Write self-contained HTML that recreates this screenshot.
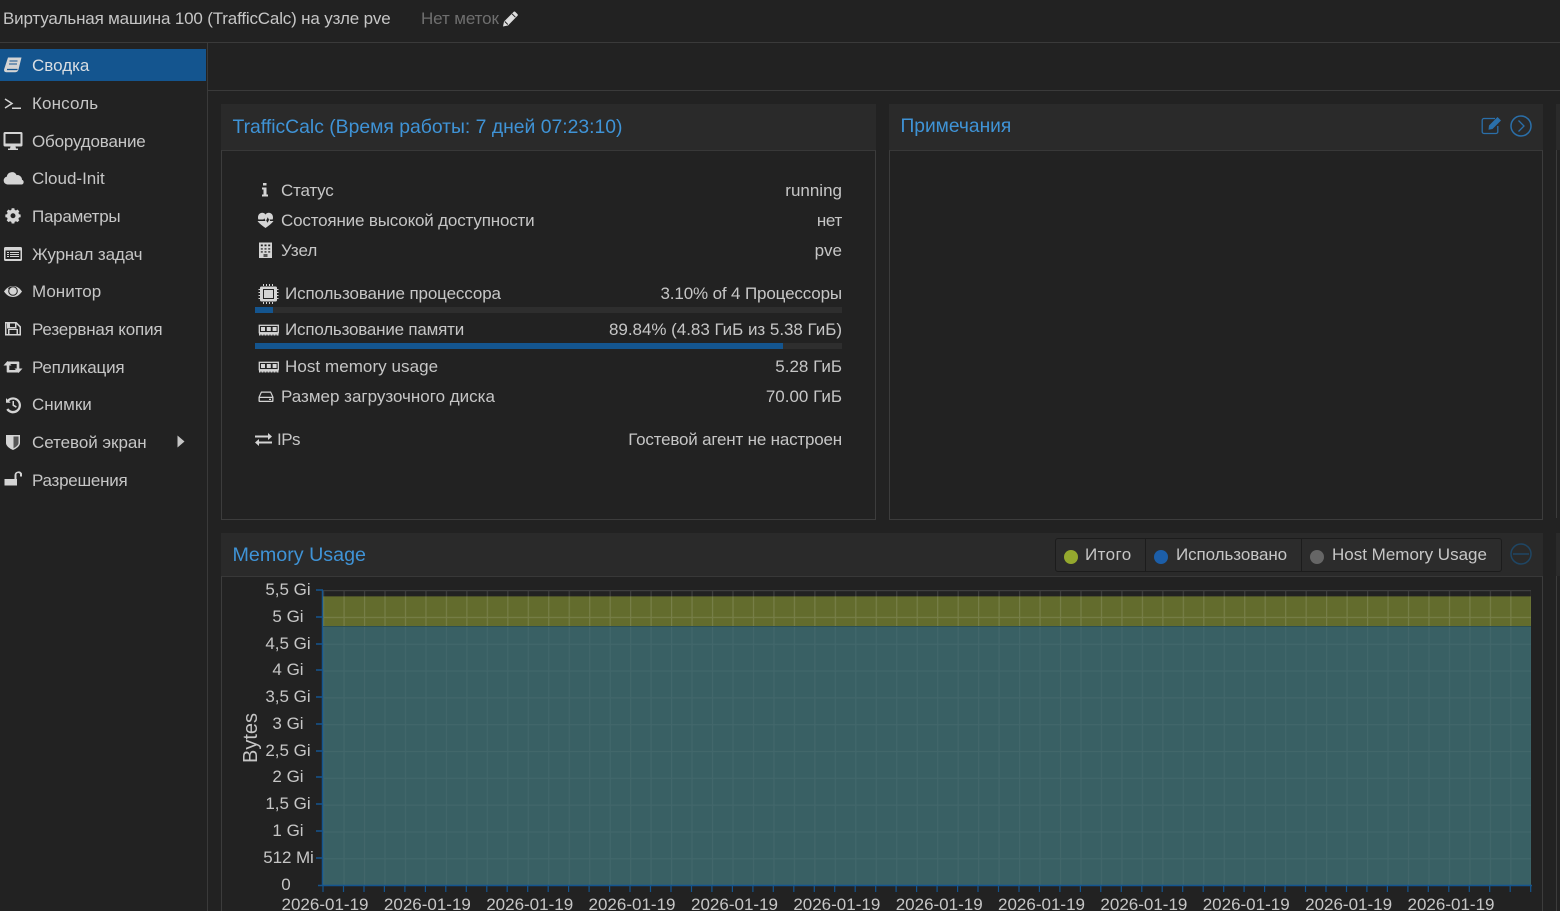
<!DOCTYPE html>
<html><head><meta charset="utf-8"><style>
html,body{margin:0;padding:0;background:#222;width:1560px;height:911px;overflow:hidden;}
#w{width:1560px;height:911px;overflow:hidden;position:relative;font-family:"Liberation Sans",sans-serif;font-size:17px;color:#c6c6c6;}
.t{position:absolute;white-space:nowrap;line-height:20px;}
.r{position:absolute;white-space:nowrap;line-height:20px;right:718px;text-align:right;}
.b{position:absolute;}
.h{color:#3f93d6;font-size:19px;line-height:24px;position:absolute;white-space:nowrap;}
svg{position:absolute;overflow:visible;}
</style></head><body><div id="w">
<div class="b" style="left:0;top:42px;width:1560px;height:1px;background:#3a3a3a"></div>
<div class="t" style="left:3px;top:9px;letter-spacing:-.17px">Виртуальная машина 100 (TrafficCalc) на узле pve</div>
<div class="t" style="left:421px;top:9px;color:#6f6f6f;letter-spacing:-.1px">Нет меток</div>
<svg style="left:502px;top:11px" width="16" height="16" viewBox="0 0 16 16"><path d="M1 15.500l1-5L11.500 1c.6-.6 1.300-.6 1.900 0l2 2c.6.600.6 1.300 0 1.900L6 14.500z" fill="#dedede"/><path d="M2.800 10.500l3 3M10 2.800l3.400 3.400" stroke="#222" stroke-width="1" fill="none"/></svg>

<div class="b" style="left:207px;top:43px;width:1px;height:868px;background:#3a3a3a"></div>
<div class="b" style="left:208px;top:90px;width:1352px;height:1px;background:#3a3a3a"></div>
<div class="b" style="left:0;top:49px;width:206px;height:32px;background:#14558f"></div>

<div class="t" style="left:32px;top:56px;color:#d8dde2">Сводка</div>
<div class="t" style="left:32px;top:94px;letter-spacing:.14px">Консоль</div>
<div class="t" style="left:32px;top:132px;letter-spacing:-.17px">Оборудование</div>
<div class="t" style="left:32px;top:169px">Cloud-Init</div>
<div class="t" style="left:32px;top:207px;letter-spacing:-.25px">Параметры</div>
<div class="t" style="left:32px;top:245px;letter-spacing:-.12px">Журнал задач</div>
<div class="t" style="left:32px;top:282px">Монитор</div>
<div class="t" style="left:32px;top:320px;letter-spacing:-.17px">Резервная копия</div>
<div class="t" style="left:32px;top:358px;letter-spacing:-.2px">Репликация</div>
<div class="t" style="left:32px;top:395px">Снимки</div>
<div class="t" style="left:32px;top:433px;letter-spacing:-.04px">Сетевой экран</div>
<div class="t" style="left:32px;top:471px;letter-spacing:-.25px">Разрешения</div>

<svg style="left:0;top:0" width="208" height="500" viewBox="0 0 208 500">
<g fill="#d4d4d4" stroke="none">
<path d="M8 57.500h13.500l-3 12c-.4 1.700-1.500 2.700-3.200 2.700H6.300C4.700 72.200 3.600 71 4.200 69z"/>
<path d="M7 69.500h10.500" stroke="#14558f" stroke-width="1.300"/>
<path d="M9.500 61h8M9 64h8" stroke="#14558f" stroke-width="1"/>
<path d="M5 99l7 4.500-7 4.500" fill="none" stroke="#d4d4d4" stroke-width="1.500"/>
<rect x="12" y="107.500" width="9" height="1.500"/>
<path d="M3.500 133.500a1.500 1.500 0 0 1 1.500-1.500h16a1.500 1.500 0 0 1 1.500 1.500v11.500a1.500 1.500 0 0 1-1.500 1.500h-5.500l.5 2h2v1.500H8v-1.500h2l.5-2H5a1.500 1.500 0 0 1-1.500-1.500zM5.500 134v9.500h15V134z" fill-rule="evenodd"/>
<path d="M7.500 185a4 4 0 0 1-.7-7.900 5.200 5.200 0 0 1 9.800-1.500 4.700 4.700 0 0 1 5.400 4.700 2.500 2.500 0 0 1 0 4.700z" transform="translate(0,-.5)"/>
<g transform="translate(13,215.700) scale(.83) translate(-13,-216)">
<path d="M11.400 207h3.200l.4 2 1.600.7 1.800-1.100 2.200 2.200-1.100 1.800.7 1.600 2 .4v3.200l-2 .4-.7 1.600 1.100 1.800-2.200 2.200-1.800-1.100-1.600.7-.4 2h-3.200l-.4-2-1.600-.7-1.800 1.100-2.200-2.200 1.100-1.800-.7-1.600-2-.4v-3.200l2-.4.7-1.600-1.100-1.800 2.200-2.200 1.800 1.100 1.600-.7zM13 213a3 3 0 1 0 0 6 3 3 0 0 0 0-6z" fill-rule="evenodd"/>
</g>
<path d="M4 248.500a1.500 1.500 0 0 1 1.500-1.500h15a1.500 1.500 0 0 1 1.500 1.500v11a1.500 1.500 0 0 1-1.500 1.500h-15a1.500 1.500 0 0 1-1.500-1.500zM5.500 250.500v8.500h15v-8.500zM7 252h2v1H7zM7 254h2v1H7zM7 256h2v1H7zM10 252h9v1h-9zM10 254h9v1h-9zM10 256h9v1h-9z" fill-rule="evenodd"/>
<path d="M4 291.500c2.500-3.700 5.500-5.500 9-5.500s6.500 1.800 9 5.500c-2.500 3.700-5.500 5.500-9 5.500s-6.500-1.800-9-5.500z"/>
<circle cx="13" cy="291" r="4.300" fill="none" stroke="#222" stroke-width="1"/>
<path d="M8.200 288.500c1-.7 2-1.100 3-1.300" fill="none" stroke="#222" stroke-width=".8"/>
<path d="M5 322h11.500l4.500 4.500V335.500H5zM6.500 323.500v10.500h1.500v-5h10v5h1.500v-6.800l-3-3v4.300h-9.500v-5zM10 323.500v3.500h5v-3.500zM9.500 330v4h7v-4z" fill-rule="evenodd"/>
<path d="M3.500 365.500L7.500 361l4 4.500H9.300V370H16.500L18.500 372.500H7.500Q6.700 372.500 6.700 371.700V365.500Z"/>
<path d="M22.500 368.500L18.500 373l-4-4.500H16.700V364H9.500L7.500 361.500H18.500Q19.300 361.500 19.300 362.300V368.500Z"/>
<path d="M6 398v4.700h4.700l-1.600-1.600a5.700 5.700 0 1 1-.8 7.300l-2 1.300a8 8 0 1 0 1.100-10.100zM12.500 401v4.700l3.500 2 .8-1.300-2.800-1.600V401z" fill-rule="evenodd"/>
<path d="M6 435h14v8c0 3-3.500 5.500-7 7-3.500-1.500-7-4-7-7z"/>
<path d="M13.500 436.500h5v6.500c0 2-2.500 4-5 5.300z" fill="#555"/>
<path d="M177.500 435.500l7 6-7 6z" fill="#c6c6c6"/>
<path d="M4.500 479h10v-3.500a4 4 0 0 1 7.500-2v3h-2v-2.500a2 2 0 0 0-3.500 0v5h.5v6.500h-12.500z"/>
</g>
</svg>

<!-- status panel -->
<div class="b" style="left:221px;top:104px;width:655px;height:46px;background:#2a2a2a"></div>
<div class="b" style="left:221px;top:150px;width:653px;height:368px;border:1px solid #3c3c3c;border-top:1px solid #383838"></div>
<div class="h" style="left:232.500px;top:115px;font-size:19.350px">TrafficCalc (Время работы: 7 дней 07:23:10)</div>

<div class="t" style="left:281px;top:181px;letter-spacing:-.2px">Статус</div>
<div class="r" style="top:181px">running</div>
<div class="t" style="left:281px;top:211px;letter-spacing:-.17px">Состояние высокой доступности</div>
<div class="r" style="top:211px;letter-spacing:-.3px">нет</div>
<div class="t" style="left:281px;top:241px">Узел</div>
<div class="r" style="top:241px">pve</div>
<div class="t" style="left:285px;top:284px;letter-spacing:-.125px">Использование процессора</div>
<div class="r" style="top:284px;letter-spacing:-.14px">3.10% of 4 Процессоры</div>
<div class="b" style="left:255px;top:307px;width:587px;height:6px;background:#2e2e2e"></div>
<div class="b" style="left:255px;top:307px;width:18px;height:6px;background:#14558f"></div>
<div class="t" style="left:285px;top:320px;letter-spacing:-.2px">Использование памяти</div>
<div class="r" style="top:320px;letter-spacing:-.03px">89.84% (4.83 ГиБ из 5.38 ГиБ)</div>
<div class="b" style="left:255px;top:343px;width:587px;height:6px;background:#2e2e2e"></div>
<div class="b" style="left:255px;top:343px;width:528px;height:6px;background:#14558f"></div>
<div class="t" style="left:285px;top:357px;letter-spacing:.06px">Host memory usage</div>
<div class="r" style="top:357px">5.28 ГиБ</div>
<div class="t" style="left:281px;top:387px">Размер загрузочного диска</div>
<div class="r" style="top:387px">70.00 ГиБ</div>
<div class="t" style="left:277px;top:430px;letter-spacing:-.5px">IPs</div>
<div class="r" style="top:430px;letter-spacing:-.19px">Гостевой агент не настроен</div>

<svg style="left:0;top:0" width="300" height="460" viewBox="0 0 300 460">
<g fill="#d4d4d4">
<path d="M263 183h3.500v2.500H263zM262 187.500h4.500v7h1.500v2h-6v-2h1.500v-5H262z"/>
<path d="M258 217.500c0-3 2-4.700 4.200-4.700 1.400 0 2.700.7 3.300 1.800.6-1.100 1.900-1.800 3.300-1.800 2.200 0 4.200 1.700 4.200 4.700 0 .8-.2 1.500-.4 2h-3.700l-1.100-2.200-2 3.800-1.600-2.800-.7 1.200h-5.100c-.2-.5-.4-1.200-.4-2zM259.500 221h5.500l.8-1.200 1.700 3 2-3.700.6 1.900h3.400c-1.600 2.300-4.600 4.700-8 7-3.400-2.300-6.400-4.700-8-7z"/>
<path d="M259 242.500h13v15.500h-13zM260.800 244.500v1.700h2v-1.700zM264.500 244.500v1.700h2v-1.700zM268.200 244.500v1.700h2v-1.700z" fill-rule="evenodd"/>
<path d="M260.800 248h2v1.700h-2zM264.500 248h2v1.700h-2zM268.200 248h2v1.700h-2zM260.800 251h2v1.700h-2zM264.500 251h2v1.700h-2zM268.200 251h2v1.700h-2zM263.500 254h4v3h-4z" fill="#555"/>
<path d="M261.500 286.500h14a1.500 1.500 0 0 1 1.500 1.500v12a1.500 1.500 0 0 1-1.500 1.500h-14a1.500 1.500 0 0 1-1.500-1.500v-12a1.500 1.500 0 0 1 1.500-1.500zM263 289v10h11v-10z" fill-rule="evenodd"/>
<rect x="264" y="290" width="9" height="8"/>
<path d="M263 284h1v2h-1zM266 284h1v2h-1zM269 284h1v2h-1zM272 284h1v2h-1zM263 302h1v2h-1zM266 302h1v2h-1zM269 302h1v2h-1zM272 302h1v2h-1zM258.500 289h1.500v1h-1.500zM258.500 292h1.500v1h-1.500zM258.500 295h1.500v1h-1.500zM258.500 298h1.500v1h-1.500zM277 289h1.500v1H277zM277 292h1.500v1H277zM277 295h1.500v1H277zM277 298h1.500v1H277z"/>
<g id="ram">
<rect x="259.300" y="325.300" width="19" height="7.400" fill="none" stroke="#d4d4d4" stroke-width="1.300"/>
<path d="M261 327h4v4h-4zM266.800 327h4v4h-4zM272.600 327h4v4h-4z"/>
<path d="M259 333h19.500v2.500h-19.500z" fill="#d4d4d4"/>
<path d="M261 334.500v1.300M264 334.500v1.300M267 334.500v1.300M270 334.500v1.300M273 334.500v1.300M276 334.500v1.300" stroke="#222" stroke-width="1"/>
</g>
<g transform="translate(0,37)">
<rect x="259.300" y="325.300" width="19" height="7.400" fill="none" stroke="#d4d4d4" stroke-width="1.300"/>
<path d="M261 327h4v4h-4zM266.800 327h4v4h-4zM272.600 327h4v4h-4z"/>
<path d="M259 333h19.500v2.500h-19.500z" fill="#d4d4d4"/>
<path d="M261 334.500v1.300M264 334.500v1.300M267 334.500v1.300M270 334.500v1.300M273 334.500v1.300M276 334.500v1.300" stroke="#222" stroke-width="1"/>
</g>
<path d="M258.500 397l2.500-5.500h10l2.500 5.500v4a1 1 0 0 1-1 1h-13a1 1 0 0 1-1-1zM261.700 392.700l-1.800 4h12.200l-1.800-4zM259.800 398v2.800h12.400V398zM269 398.800h2v1.200h-2z" fill-rule="evenodd"/>
<path d="M255 435.500h13v-2.500l4 3.500-4 3.500v-2.500h-13zM272 441.500h-13v-2.500l-4 3.500 4 3.500v-2.500h13z"/>
</g>
</svg>

<!-- notes panel -->
<div class="b" style="left:889px;top:104px;width:654px;height:46px;background:#2a2a2a"></div>
<div class="b" style="left:889px;top:150px;width:652px;height:368px;border:1px solid #3c3c3c;border-top:1px solid #383838"></div>
<div class="h" style="left:900.500px;top:115px;font-size:19.200px">Примечания</div>
<svg style="left:1481px;top:115px" width="54" height="22" viewBox="0 0 54 22">
<g fill="none" stroke="#2a6fa9" stroke-width="1.300">
<path d="M14 3.500H3a1.800 1.800 0 0 0-1.800 1.800v11.400A1.800 1.800 0 0 0 3 18.500h12a1.800 1.800 0 0 0 1.800-1.800V11"/>
<circle cx="40" cy="11" r="10" stroke-width="1.500"/>
<path d="M37.500 5.500L43 11l-5.500 5.500" stroke-width="1.300"/>
</g>
<path d="M8 10.500L16.500 2l3.500 3.500-8.500 8.500-4 .7z" fill="#2a6fa9"/>
</svg>

<!-- next column edge -->
<div class="b" style="left:1556px;top:104px;width:4px;height:46px;background:#2a2a2a"></div>
<div class="b" style="left:1556px;top:150px;width:4px;height:368px;border-left:1px solid #3c3c3c;box-sizing:border-box"></div>
<div class="b" style="left:1556px;top:533px;width:4px;height:43px;background:#2a2a2a"></div>
<div class="b" style="left:1556px;top:576px;width:4px;height:335px;border-left:1px solid #3c3c3c;box-sizing:border-box"></div>

<!-- memory panel -->
<div class="b" style="left:221px;top:533px;width:1322px;height:43px;background:#2a2a2a"></div>
<div class="b" style="left:221px;top:576px;width:1320px;height:340px;border:1px solid #3c3c3c;border-top:1px solid #383838"></div>
<div class="h" style="left:232.500px;top:543px;font-size:19.700px">Memory Usage</div>

<div class="b" style="left:1055px;top:538px;width:445px;height:32px;border:1px solid #1c1c1c;border-radius:3px;background:#2c2c2c"></div>
<div class="b" style="left:1145px;top:539px;width:1px;height:32px;background:#1c1c1c"></div>
<div class="b" style="left:1301px;top:539px;width:1px;height:32px;background:#1c1c1c"></div>
<div class="b" style="left:1064px;top:550px;width:14px;height:14px;border-radius:50%;background:#94a82e"></div>
<div class="b" style="left:1154px;top:550px;width:14px;height:14px;border-radius:50%;background:#1c5ea8"></div>
<div class="b" style="left:1310px;top:550px;width:14px;height:14px;border-radius:50%;background:#666"></div>
<div class="t" style="left:1085px;top:545px;letter-spacing:.4px">Итого</div>
<div class="t" style="left:1176px;top:545px;letter-spacing:-.08px">Использовано</div>
<div class="t" style="left:1332px;top:545px">Host Memory Usage</div>
<svg style="left:1510px;top:543px" width="22" height="22" viewBox="0 0 22 22"><circle cx="11" cy="11" r="10" fill="none" stroke="#1f4664" stroke-width="1.500"/><path d="M3 11h16" stroke="#1f4664" stroke-width="1.500"/></svg>

<svg style="left:0;top:0" width="1560" height="911" viewBox="0 0 1560 911" font-family="'Liberation Sans',sans-serif" font-size="17" fill="#c6c6c6">
<defs>
<pattern id="gv" x="323" y="0" width="20.47" height="911" patternUnits="userSpaceOnUse"><rect width="1.200" height="911" fill="#fff"/></pattern>
<pattern id="gh" x="0" y="590" width="1560" height="26.82" patternUnits="userSpaceOnUse"><rect width="1560" height="1.200" fill="#fff"/></pattern>
</defs>
<rect x="323" y="597" width="1208" height="29.500" fill="#636c2d"/>
<rect x="323" y="626.500" width="1208" height="259" fill="#396064"/>
<rect x="323" y="626" width="1208" height="1" fill="#2c5053"/>
<rect x="323" y="596" width="1208" height="1" fill="#4b5028"/>
<g opacity=".13">
<rect x="323" y="590" width="1208" height="36" fill="url(#gv)"/>
<rect x="323" y="590" width="1208" height="36" fill="url(#gh)"/>
</g>
<g opacity=".045">
<rect x="323" y="627" width="1208" height="258" fill="url(#gv)"/>
<rect x="323" y="627" width="1208" height="258" fill="url(#gh)"/>
</g>
<path d="M322.500 590V886" stroke="#14558f" stroke-width="1.500"/>
<path d="M318 885.500H1532" stroke="#14558f" stroke-width="1.500"/>
<path d="M316 590H323M316 617H323M316 644H323M316 670H323M316 697H323M316 724H323M316 751H323M316 777H323M316 804H323M316 831H323M316 858H323" stroke="#14558f" stroke-width="1.500"/>
<g stroke="#14558f" stroke-width="1.200">
<path d="M323 886v6M343.500 886v6M364 886v6M384.400 886v6M404.900 886v6M425.400 886v6M445.800 886v6M466.300 886v6M486.800 886v6M507.200 886v6M527.700 886v6M548.200 886v6M568.600 886v6M589.100 886v6M609.600 886v6M630 886v6M650.500 886v6M671 886v6M691.500 886v6M711.900 886v6M732.400 886v6M752.900 886v6M773.300 886v6M793.800 886v6M814.300 886v6M834.700 886v6M855.200 886v6M875.700 886v6M896.100 886v6M916.600 886v6M937.100 886v6M957.600 886v6M978 886v6M998.500 886v6M1019 886v6M1039.400 886v6M1059.900 886v6M1080.400 886v6M1100.800 886v6M1121.300 886v6M1141.800 886v6M1162.200 886v6M1182.700 886v6M1203.200 886v6M1223.700 886v6M1244.100 886v6M1264.600 886v6M1285.100 886v6M1305.500 886v6M1326 886v6M1346.500 886v6M1366.900 886v6M1387.400 886v6M1407.900 886v6M1428.300 886v6M1448.800 886v6M1469.300 886v6M1489.700 886v6M1510.200 886v6M1530.700 886v6"/>
</g>
<g text-anchor="middle">
<text x="288" y="595">5,5 Gi</text>
<text x="288" y="622">5 Gi</text>
<text x="288" y="649">4,5 Gi</text>
<text x="288" y="675">4 Gi</text>
<text x="288" y="702">3,5 Gi</text>
<text x="288" y="729">3 Gi</text>
<text x="288" y="756">2,5 Gi</text>
<text x="288" y="782">2 Gi</text>
<text x="288" y="809">1,5 Gi</text>
<text x="288" y="836">1 Gi</text>
<text x="288.500" y="863" letter-spacing="-.1">512 Mi</text>
<text x="286" y="890">0</text>
<text transform="translate(257,738) rotate(-90)" font-size="20">Bytes</text>
<text x="325" y="910">2026-01-19</text>
<text x="427.400" y="910">2026-01-19</text>
<text x="529.700" y="910">2026-01-19</text>
<text x="632" y="910">2026-01-19</text>
<text x="734.500" y="910">2026-01-19</text>
<text x="836.800" y="910">2026-01-19</text>
<text x="939.200" y="910">2026-01-19</text>
<text x="1041.500" y="910">2026-01-19</text>
<text x="1143.900" y="910">2026-01-19</text>
<text x="1246.200" y="910">2026-01-19</text>
<text x="1348.600" y="910">2026-01-19</text>
<text x="1451" y="910">2026-01-19</text>
</g>
</svg>
</div></body></html>
